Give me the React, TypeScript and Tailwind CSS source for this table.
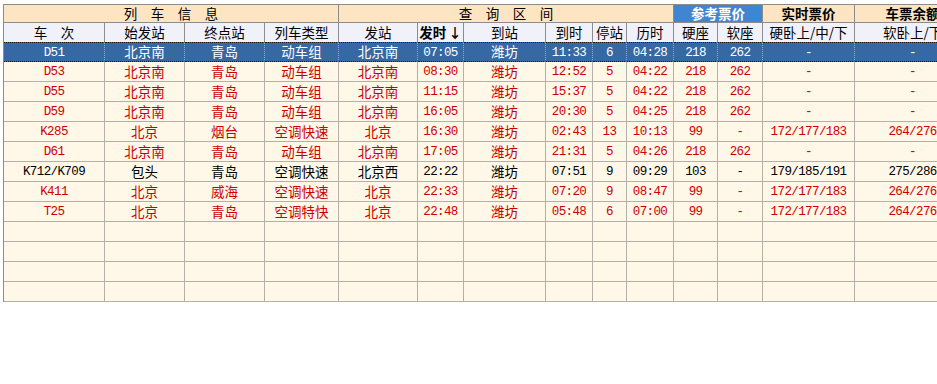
import React from 'react';

const widths = [101, 80, 80, 74, 79, 46, 82, 47, 34, 47, 44, 45, 92, 116];

// columns that hold latin/digits (rendered in a mono face, smaller)
const monoCols = new Set([0, 5, 7, 8, 9, 10, 11, 12, 13]);

interface Train {
  cells: string[];
  black?: boolean;
  selected?: boolean;
}

const trains: Train[] = [
  { cells: ['D51', '北京南', '青岛', '动车组', '北京南', '07:05', '潍坊', '11:33', '6', '04:28', '218', '262', '-', '-'], selected: true },
  { cells: ['D53', '北京南', '青岛', '动车组', '北京南', '08:30', '潍坊', '12:52', '5', '04:22', '218', '262', '-', '-'] },
  { cells: ['D55', '北京南', '青岛', '动车组', '北京南', '11:15', '潍坊', '15:37', '5', '04:22', '218', '262', '-', '-'] },
  { cells: ['D59', '北京南', '青岛', '动车组', '北京南', '16:05', '潍坊', '20:30', '5', '04:25', '218', '262', '-', '-'] },
  { cells: ['K285', '北京', '烟台', '空调快速', '北京', '16:30', '潍坊', '02:43', '13', '10:13', '99', '-', '172/177/183', '264/276'] },
  { cells: ['D61', '北京南', '青岛', '动车组', '北京南', '17:05', '潍坊', '21:31', '5', '04:26', '218', '262', '-', '-'] },
  { cells: ['K712/K709', '包头', '青岛', '空调快速', '北京西', '22:22', '潍坊', '07:51', '9', '09:29', '103', '-', '179/185/191', '275/286'], black: true },
  { cells: ['K411', '北京', '威海', '空调快速', '北京', '22:33', '潍坊', '07:20', '9', '08:47', '99', '-', '172/177/183', '264/276'] },
  { cells: ['T25', '北京', '青岛', '空调特快', '北京', '22:48', '潍坊', '05:48', '6', '07:00', '99', '-', '172/177/183', '264/276'] },
];

const cjk = "font-['Noto_Sans_CJK_SC',sans-serif] text-[13.5px]";
const mono = "font-['Liberation_Mono','Noto_Sans_CJK_SC',monospace] text-[12.5px] tracking-[-0.6px] pt-[2px]";

const subHeads = ['车　次', '始发站', '终点站', '列车类型', '发站', '', '到站', '到时', '停站', '历时', '硬座', '软座', '硬卧上/中/下', '软卧上/下'];

export default function App() {
  return (
    <div className="w-[937px] h-[384px] overflow-hidden bg-white">
      <table className="ml-[3px] mt-[4px] w-[967px] table-fixed border-separate border-spacing-0 border-l border-t border-[#8c8c8c] leading-none">
        <colgroup>
          {widths.map((w, i) => (
            <col key={i} style={{ width: w }} />
          ))}
        </colgroup>
        <thead>
          <tr>
            <th colSpan={4} className={`h-[18px] p-0 bg-[#fde4c3] border-r border-b border-[#8c8c8c] font-normal text-black ${cjk}`}>
              列　车　信　息
            </th>
            <th colSpan={6} className={`h-[18px] p-0 bg-[#fde4c3] border-r border-b border-[#8c8c8c] font-normal text-black ${cjk}`}>
              查　询　区　间
            </th>
            <th colSpan={2} className={`h-[18px] p-0 bg-[#3f86d2] border-r border-b border-[#8c8c8c] font-bold text-white ${cjk}`}>
              参考票价
            </th>
            <th className={`h-[18px] p-0 bg-[#fde4c3] border-r border-b border-[#8c8c8c] font-bold text-black ${cjk}`}>
              实时票价
            </th>
            <th className={`h-[18px] p-0 bg-[#fde4c3] border-r border-b border-[#8c8c8c] font-bold text-black ${cjk} whitespace-nowrap overflow-hidden`}>
              车票余额
            </th>
          </tr>
          <tr>
            {subHeads.map((t, i) => (
              <th
                key={i}
                className={`h-[19px] p-0 bg-[#f1f1f9] border-r border-[#8c8c8c] font-normal text-black whitespace-nowrap overflow-hidden ${cjk}`}
              >
                {i === 5 ? (
                  <span className="font-bold">
                    发时<span className="ml-[2px]">↓</span>
                  </span>
                ) : (
                  t
                )}
              </th>
            ))}
          </tr>
        </thead>
        <tbody>
          {trains.map((r, ri) => (
            <tr key={ri}>
              {r.cells.map((c, ci) => (
                <td
                  key={ci}
                  className={[
                    'p-0 text-center whitespace-nowrap overflow-hidden',
                    monoCols.has(ci) ? mono : cjk,
                    r.selected
                      ? 'h-[20px] bg-[#3668a3] text-white border-r border-r-[#93a9c6] border-y border-dotted border-y-[#1c1c1c]'
                      : `h-[20px] bg-[#fff8e8] border-r border-b border-[#b4b0a8] ${r.black ? 'text-black' : 'text-[#cc0000]'}`,
                  ].join(' ')}
                >
                  {c}
                </td>
              ))}
            </tr>
          ))}
          {[0, 1, 2, 3].map((k) => (
            <tr key={`e${k}`}>
              {widths.map((_, ci) => (
                <td key={ci} className="h-[20px] p-0 bg-[#fff8e8] border-r border-b border-[#b4b0a8]" />
              ))}
            </tr>
          ))}
        </tbody>
      </table>
    </div>
  );
}
